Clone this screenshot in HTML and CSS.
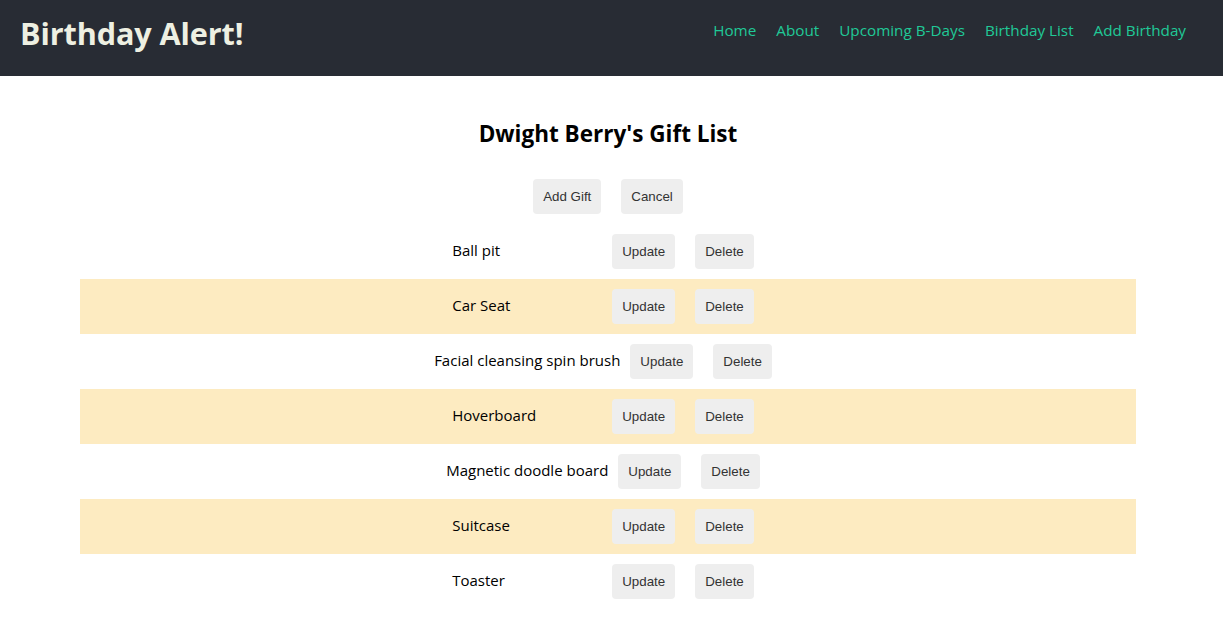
FILE: index.html
```html
<!DOCTYPE html>
<html lang="en">
<head>
<meta charset="utf-8">
<title>Birthday Alert!</title>
<link rel="stylesheet" href="styles.css">
</head>
<body>
<header class="topbar">
  <h1 class="brand">Birthday Alert!</h1>
  <nav class="nav">
    <a class="nav-link" href="#">Home</a>
    <a class="nav-link" href="#">About</a>
    <a class="nav-link" href="#">Upcoming B-Days</a>
    <a class="nav-link" href="#">Birthday List</a>
    <a class="nav-link" href="#">Add Birthday</a>
  </nav>
</header>
<main class="content">
  <h2 class="page-title">Dwight Berry's Gift List</h2>
  <div class="toolbar">
    <button class="btn">Add Gift</button>
    <button class="btn">Cancel</button>
  </div>
  <ul class="gift-list">
    <li class="gift"><span class="gift-name">Ball pit</span><button class="btn">Update</button><button class="btn">Delete</button></li>
    <li class="gift"><span class="gift-name">Car Seat</span><button class="btn">Update</button><button class="btn">Delete</button></li>
    <li class="gift"><span class="gift-name">Facial cleansing spin brush</span><button class="btn">Update</button><button class="btn">Delete</button></li>
    <li class="gift"><span class="gift-name">Hoverboard</span><button class="btn">Update</button><button class="btn">Delete</button></li>
    <li class="gift"><span class="gift-name">Magnetic doodle board</span><button class="btn">Update</button><button class="btn">Delete</button></li>
    <li class="gift"><span class="gift-name">Suitcase</span><button class="btn">Update</button><button class="btn">Delete</button></li>
    <li class="gift"><span class="gift-name">Toaster</span><button class="btn">Update</button><button class="btn">Delete</button></li>
  </ul>
</main>
</body>
</html>
```
FILE: styles.css
```css
* { box-sizing: border-box; }
body {
  margin: 0;
  font-family: "Segoe UI", "Open Sans", sans-serif;
  color: #000;
  background: #fff;
}
.topbar {
  height: 76px;
  background: #282c34;
  display: flex;
  align-items: center;
  justify-content: space-between;
  padding: 0 37px 0 20px;
}
.brand {
  margin: -10px 0 0;
  font-size: 30.6px;
  font-weight: 700;
  color: #eef0e2;
  line-height: 1;
  letter-spacing: -0.1px;
}
.nav {
  display: flex;
  gap: 20px;
  margin-top: -16px;
}
.nav-link {
  color: #20c997;
  text-decoration: none;
  font-size: 15.25px;
}
.content {
  width: 1056px;
  margin-left: 80px;
}
.page-title {
  margin: 0;
  padding: 42px 0 19px;
  font-size: 22.5px;
  line-height: 32px;
  font-weight: 700;
  text-align: center;
}
.toolbar {
  display: flex;
  justify-content: center;
}
.btn {
  font-family: "Liberation Sans", Arial, sans-serif;
  font-size: 13.333px;
  line-height: 15px;
  color: #333;
  background: #eee;
  border: none;
  border-radius: 4px;
  padding: 10px;
  margin: 10px;
}
.gift-list {
  list-style: none;
  margin: 0;
  padding: 0;
}
.gift {
  display: flex;
  justify-content: center;
  align-items: center;
  height: 55px;
}
.gift:nth-child(even) {
  background: #fdebc1;
}
.gift-name {
  min-width: 150px;
  font-size: 15px;
  padding-bottom: 4px;
}
```
